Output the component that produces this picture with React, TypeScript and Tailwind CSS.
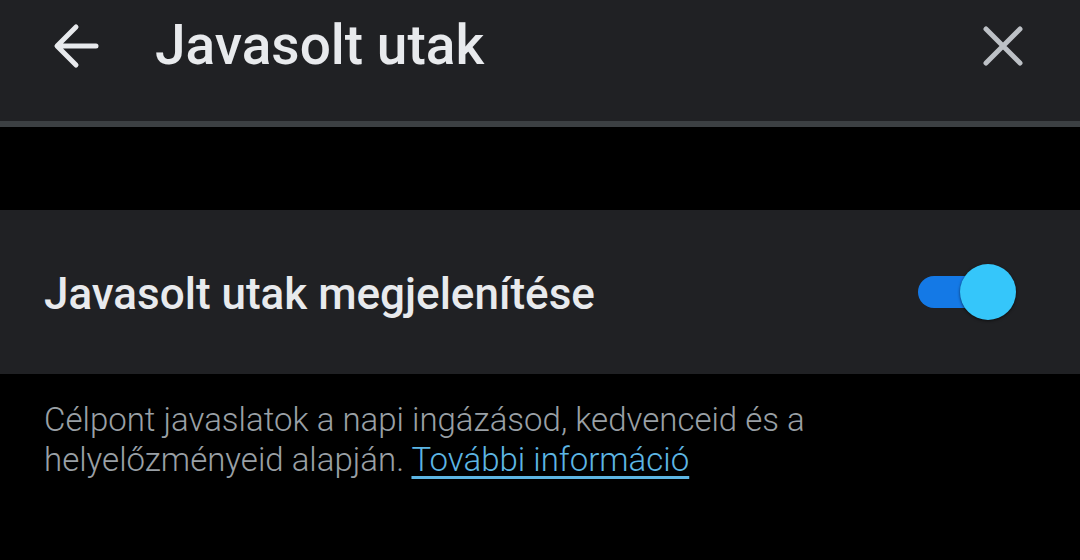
import React from "react";

function BackArrow() {
  return (
    <svg width="48" height="48" viewBox="0 0 48 48" fill="none">
      <path
        d="M44 24H6M24 5L5 24l19 19"
        stroke="#e8eaed"
        strokeWidth="5"
        strokeLinecap="round"
        strokeLinejoin="round"
      />
    </svg>
  );
}

function CloseIcon() {
  return (
    <svg width="42" height="42" viewBox="0 0 42 42" fill="none">
      <path d="M4 4l34 34M38 4L4 38" stroke="#bdc1c6" strokeWidth="5" strokeLinecap="round" />
    </svg>
  );
}

function Toggle() {
  return (
    <div className="relative w-[98px] h-[56px] flex items-center">
      <div className="w-[76px] h-[32px] rounded-full bg-[#1479e6]" />
      <div className="absolute right-0 top-0 w-[56px] h-[56px] rounded-full bg-[#35c6fa] shadow-[0_1px_3px_rgba(0,0,0,0.6)]" />
    </div>
  );
}

export default function App() {
  return (
    <div className="w-[1080px] h-[560px] bg-black overflow-hidden font-['Roboto',sans-serif]">
      <div className="h-[127px] bg-[#202124] border-b-[6px] border-[#3c4043] flex items-center pb-[30px] pl-[52px] pr-[56px]">
        <BackArrow />
        <div className="ml-[55px] text-[55px] font-medium text-[#e8eaed]">Javasolt utak</div>
        <div className="ml-auto">
          <CloseIcon />
        </div>
      </div>
      <div className="h-[83px]" />
      <div className="h-[164px] bg-[#202124] flex items-center pl-[44px] pr-[64px]">
        <div className="text-[44px] font-medium text-[#e8eaed] pt-[4px]">Javasolt utak megjelenítése</div>
        <div className="ml-auto">
          <Toggle />
        </div>
      </div>
      <div className="pt-[26px] pl-[44px] pr-[40px] text-[33px] font-light leading-[40px] text-[#9aa0a6]">
        Célpont javaslatok a napi ingázásod, kedvenceid és a
        <br />
        helyelőzményeid alapján.{" "}
        <a className="text-[#5db6e4] underline underline-offset-[5px]">További információ</a>
      </div>
    </div>
  );
}
